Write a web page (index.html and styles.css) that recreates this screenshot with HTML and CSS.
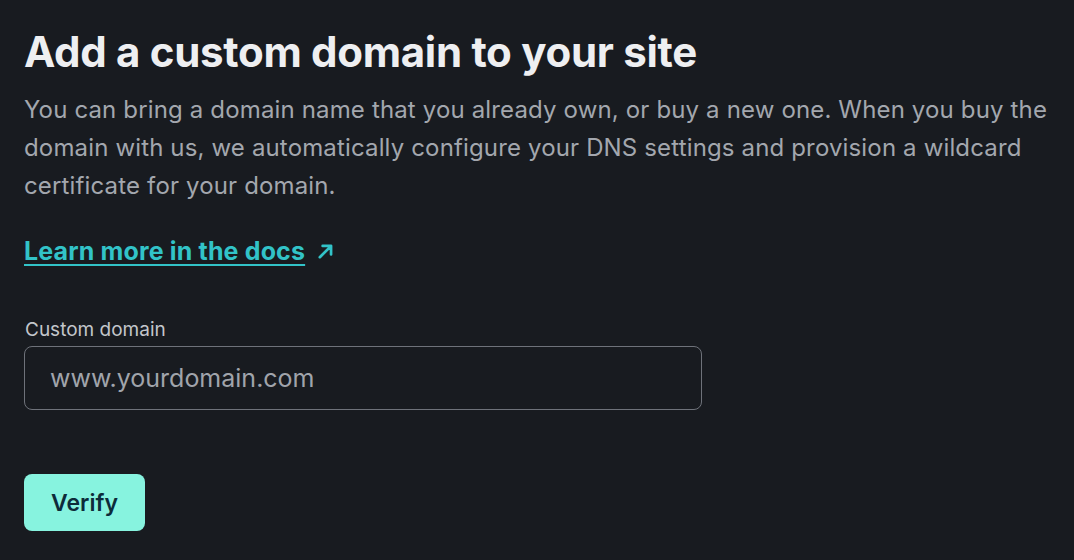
FILE: index.html
```html
<!DOCTYPE html>
<html>
<head>
<meta charset="utf-8">
<link rel="stylesheet" href="styles.css">
</head>
<body>
<main class="page">
  <h1 class="title">Add a custom domain to your site</h1>
  <p class="desc">You can bring a domain name that you already own, or buy a new one. When you buy the domain with us, we automatically configure your DNS settings and provision a wildcard certificate for your domain.</p>
  <a class="docs" href="#"><span class="docs-text">Learn more in the docs</span><svg class="arrow" width="18" height="18" viewBox="0 0 16 16"><path d="M2.5 13.5 L12.5 3.5 M5 3.5 H12.5 V11" fill="none" stroke="currentColor" stroke-width="2.4" stroke-linecap="round" stroke-linejoin="round"/></svg></a>
  <form class="form">
    <label class="label" for="domain">Custom domain</label>
    <input class="input" id="domain" type="text" placeholder="www.yourdomain.com">
    <button class="btn" type="button">Verify</button>
  </form>
</main>
</body>
</html>
```
FILE: styles.css
```css
html, body {
  margin: 0;
  padding: 0;
  background: #181b20;
}
body {
  font-family: Inter, "Noto Sans", sans-serif;
  color: #eeeff1;
}
.page {
  padding: 26px 24px 0 24px;
  display: flex;
  flex-direction: column;
  align-items: flex-start;
}
.title {
  margin: 0;
  font-size: 42px;
  font-weight: 700;
  line-height: 52px;
  letter-spacing: -0.3px;
  color: #eeeff1;
}
.desc {
  margin: 13px 0 0 0;
  font-size: 24px;
  line-height: 38px;
  letter-spacing: 0.15px;
  color: #a3a7ae;
  max-width: 1040px;
}
.docs {
  margin-top: 31px;
  display: inline-flex;
  align-items: center;
  gap: 12px;
  color: #32c3c8;
  font-size: 25px;
  font-weight: 700;
  letter-spacing: 0.15px;
  text-decoration: none;
  line-height: 30px;
}
.docs-text {
  text-decoration: underline;
  text-decoration-thickness: 2px;
  text-underline-offset: 4px;
}
.arrow {
  display: block;
}
.form {
  margin-top: 53px;
  display: flex;
  flex-direction: column;
  align-items: flex-start;
}
.label {
  font-size: 19px;
  line-height: 22px;
  color: #c3c6cb;
  margin-left: 1px;
}
.input {
  margin-top: 5px;
  box-sizing: border-box;
  width: 678px;
  height: 64px;
  padding: 0 25px;
  background: transparent;
  border: 1px solid #6e727a;
  border-radius: 8px;
  font-family: inherit;
  font-size: 25px;
  color: #eeeff1;
  outline: none;
}
.input::placeholder {
  color: #a0a4ab;
}
.btn {
  margin-top: 64px;
  width: 121px;
  height: 57px;
  border: none;
  border-radius: 8px;
  background: #87f3df;
  color: #0d2b3a;
  font-family: inherit;
  font-size: 23px;
  font-weight: 600;
  cursor: pointer;
}
```
